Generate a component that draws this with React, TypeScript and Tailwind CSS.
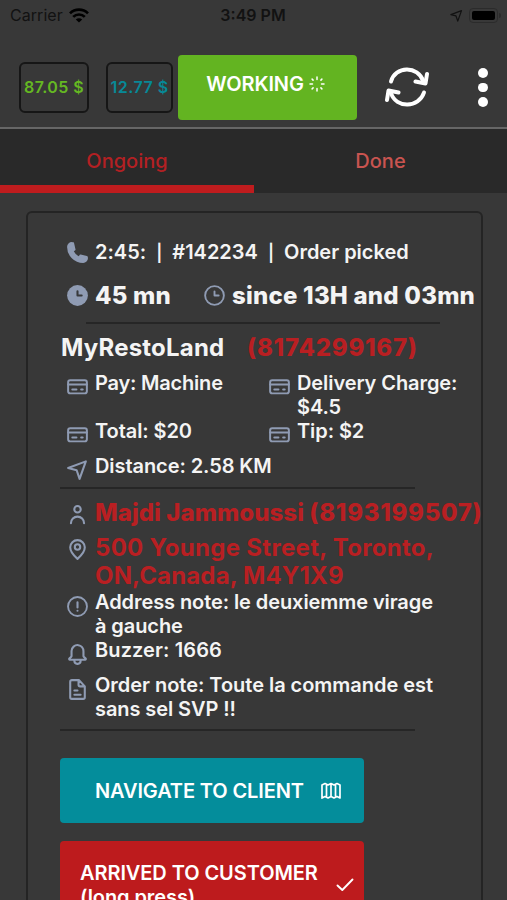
import type { ReactNode } from 'react';

type IconProps = { className?: string };

function Svg({ className, children }: IconProps & { children: ReactNode }) {
  return (
    <svg
      viewBox="0 0 24 24"
      className={className ?? 'size-[25px]'}
      fill="none"
      stroke="currentColor"
      strokeWidth={2}
      strokeLinecap="round"
      strokeLinejoin="round"
    >
      {children}
    </svg>
  );
}

function PhoneIcon() {
  return (
    <Svg>
      <path
        fill="currentColor"
        stroke="none"
        d="M17.4 22A15.42 15.42 0 0 1 2 6.6 4.6 4.6 0 0 1 6.6 2a3.94 3.94 0 0 1 .77.07 3.79 3.79 0 0 1 .72.18 1 1 0 0 1 .65.75l1.37 6a1 1 0 0 1-.26.92c-.13.14-.14.15-1.37.79a9.91 9.91 0 0 0 4.87 4.89c.65-1.24.66-1.25.8-1.38a1 1 0 0 1 .92-.26l6 1.37a1 1 0 0 1 .72.65 4.34 4.34 0 0 1 .19.73 4.77 4.77 0 0 1 .06.76A4.6 4.6 0 0 1 17.4 22z"
      />
    </Svg>
  );
}

function ClockIcon() {
  return (
    <Svg>
      <circle cx="12" cy="12" r="10" fill="currentColor" stroke="none" />
      <path d="M12 8v4h4" stroke="#38393b" />
    </Svg>
  );
}

function ClockOutlineIcon() {
  return (
    <Svg>
      <circle cx="12" cy="12" r="9" strokeWidth={1.8} />
      <path d="M12 8v4h4" strokeWidth={1.8} />
    </Svg>
  );
}

function CardIcon() {
  return (
    <Svg>
      <rect x="3" y="6" width="18" height="12.6" rx="2" strokeWidth={1.9} />
      <path d="M3 10h18M7 14.8h4M15.5 14.8h1.5" strokeWidth={1.9} />
    </Svg>
  );
}

function NavigationIcon({ className }: IconProps) {
  return (
    <Svg className={className}>
      <path d="M3 10.6 20 4.2 14 21l-2.8-8.3z" />
    </Svg>
  );
}

function PersonIcon() {
  return (
    <Svg>
      <circle cx="12" cy="7" r="3.1" />
      <path d="M5.7 20.3a6.3 6.3 0 0 1 12.6 0" />
    </Svg>
  );
}

function PinIcon() {
  return (
    <Svg>
      <path d="M12 3a7 7 0 0 0-7 6.9C5 15 12 21 12 21s7-6 7-11.1A7 7 0 0 0 12 3z" />
      <circle cx="12" cy="9.6" r="2.6" />
    </Svg>
  );
}

function AlertIcon() {
  return (
    <Svg>
      <circle cx="12" cy="12" r="9.1" strokeWidth={1.8} />
      <path d="M12 8v5M12 16v.1" />
    </Svg>
  );
}

function BellIcon() {
  return (
    <Svg>
      <path
        fill="currentColor"
        stroke="none"
        d="M20.52 15.21l-1.8-1.81V8.94a6.86 6.86 0 0 0-5.82-6.88 6.74 6.74 0 0 0-7.62 6.67v4.67l-1.8 1.81A1.64 1.64 0 0 0 4.64 18H8v.34A3.84 3.84 0 0 0 12 22a3.84 3.84 0 0 0 4-3.66V18h3.36a1.64 1.64 0 0 0 1.16-2.79zM14 18.34A1.88 1.88 0 0 1 12 20a1.88 1.88 0 0 1-2-1.66V18h4zM5.51 16l1.18-1.18a2 2 0 0 0 .59-1.42V8.73A4.73 4.73 0 0 1 8.9 5.17 4.67 4.67 0 0 1 12.64 4a4.86 4.86 0 0 1 4.08 4.9v4.5a2 2 0 0 0 .58 1.42L18.49 16z"
      />
    </Svg>
  );
}

function FileIcon() {
  return (
    <Svg>
      <path d="M13.5 3h-7A1.5 1.5 0 0 0 5 4.5v15A1.5 1.5 0 0 0 6.5 21h11a1.5 1.5 0 0 0 1.5-1.5V9zM13 3.5v4A1.5 1.5 0 0 0 14.5 9H18M9 13h3M9 17h6" />
    </Svg>
  );
}

function WifiIcon() {
  return (
    <svg viewBox="0 0 20 15" className="h-[15px] w-5" fill="none" stroke="#000" strokeWidth="2.7">
      <path d="M1 5.4a12.8 12.8 0 0 1 18 0M4.2 8.9a8.2 8.2 0 0 1 11.6 0" />
      <path d="M10 14.6 6.8 11.5a4.6 4.6 0 0 1 6.4 0z" fill="#000" stroke="none" />
    </svg>
  );
}

function RefreshIcon() {
  return (
    <svg
      viewBox="0 0 44 40"
      className="h-10 w-11"
      fill="none"
      stroke="#fff"
      strokeWidth="4"
      strokeLinecap="round"
      strokeLinejoin="round"
    >
      <path d="M6 14.5C10-1 33-2 38.5 14.5M39 25.5C34 41 11 42 6 26" />
      <path d="M42 7 40.5 16.5 30.5 14.5M2 33 3.5 23.5l10 2" />
    </svg>
  );
}

function SpinnerIcon() {
  return (
    <svg viewBox="0 0 18 18" className="size-[18px]" stroke="#fff" strokeWidth="1.5" strokeLinecap="round">
      <path d="M9 2v2.5M9 13.5V16M2 9h2.5M13.5 9H16M4.1 4.1l1 1M12.9 12.9l1 1M4.1 13.9l1-1M12.9 5.1l1-1" />
    </svg>
  );
}

function MapIcon() {
  return (
    <svg
      viewBox="0 0 20 18"
      className="h-[18px] w-5"
      fill="none"
      stroke="#fff"
      strokeWidth="1.7"
      strokeLinejoin="round"
      strokeLinecap="round"
    >
      <path d="M1 3 4 1.5 7 3l3-1.5L13 3l3-1.5L19 3v13l-3-1.5-3 1.500-3-1.500L7 16l-3-1.500L1 16zM5.500 2.500v12.500M10 2v12.500M14.500 2.500v12.500" />
    </svg>
  );
}

function CheckIcon() {
  return (
    <svg
      viewBox="0 0 18 14"
      className="h-[14px] w-[18px]"
      fill="none"
      stroke="#fff"
      strokeWidth="1.9"
      strokeLinecap="round"
      strokeLinejoin="round"
    >
      <path d="M1.5 7.5 6.3 12 16.5 1.5" />
    </svg>
  );
}

type RowProps = {
  icon: ReactNode;
  children: ReactNode;
  className?: string;
  iconClassName?: string;
};

function Row({ icon, children, className = '', iconClassName = 'mt-[3px]' }: RowProps) {
  return (
    <div className={`flex ${className}`}>
      <span className={`mr-[5px] h-0 w-[25px] shrink-0 text-[#8f9bb3] ${iconClassName}`}>{icon}</span>
      <div>{children}</div>
    </div>
  );
}

function Divider({ className }: { className: string }) {
  return <div className={`h-[2px] bg-[#262626] ${className}`} />;
}

function StatusBar() {
  return (
    <div className="flex h-[30px] shrink-0 items-center justify-between pr-[6px] pl-[10px] text-[16px] text-[#121212]">
      <div className="flex w-[170px] items-center gap-[6px]">
        <span className="tracking-[0.05px]">Carrier</span>
        <WifiIcon />
      </div>
      <span className="-ml-[5px] font-semibold">3:49 PM</span>
      <div className="flex w-[170px] items-center justify-end gap-[5px]">
        <NavigationIcon className="size-[15px]" />
        <div className="flex items-center gap-px">
          <div className="h-[15px] w-[29px] rounded-[4px] border border-[#2b2b2b] p-[2px]">
            <div className="h-full rounded-[2px] bg-black" />
          </div>
          <div className="h-[5px] w-[2px] rounded-r bg-[#2b2b2b]" />
        </div>
      </div>
    </div>
  );
}

function Toolbar() {
  return (
    <div className="flex h-[97px] shrink-0 items-start pt-[25px] pl-[19px]">
      <div className="mt-[7px] flex h-[51px] w-[70px] shrink-0 items-center justify-center rounded-[6px] border-2 border-[#161616] pb-[2px] text-[16px] font-semibold tracking-[0.4px] whitespace-nowrap text-[#65b822]">
        87.05 $
      </div>
      <div className="mt-[7px] ml-[17px] flex h-[51px] w-[67px] shrink-0 items-center justify-center rounded-[6px] border-2 border-[#161616] pb-[2px] text-[16px] font-semibold tracking-[0.5px] whitespace-nowrap text-[#078997]">
        12.77 $
      </div>
      <button className="ml-[5px] flex h-[65px] w-[179px] shrink-0 items-center justify-center gap-[4px] rounded-[4px] bg-[#63b421] pr-[3px] pb-[7px] text-[20px] font-semibold tracking-[-0.1px] text-white">
        WORKING
        <SpinnerIcon />
      </button>
      <div className="mt-[12px] ml-[28px] shrink-0">
        <RefreshIcon />
      </div>
      <div className="mt-[13px] ml-[49px] flex shrink-0 flex-col gap-[5px]">
        <span className="size-[9.5px] rounded-full bg-white" />
        <span className="size-[9.5px] rounded-full bg-white" />
        <span className="size-[9.5px] rounded-full bg-white" />
      </div>
    </div>
  );
}

function Tabs() {
  return (
    <div className="flex h-[64px] shrink-0 bg-[#292929] text-center text-[20px] leading-[64px] font-medium">
      <div className="h-full w-[254px] border-b-8 border-[#bf1c1e] text-[#b32023]">Ongoing</div>
      <div className="flex-1 text-[#c95450]">Done</div>
    </div>
  );
}

export default function App() {
  return (
    <div className="flex h-[900px] w-[507px] flex-col overflow-hidden bg-[#383838] font-[Inter,sans-serif]">
      <StatusBar />
      <Toolbar />
      <div className="h-[2px] shrink-0 bg-[#666]" />
      <Tabs />
      <div className="mt-[18px] ml-[26px] h-[760px] w-[457px] shrink-0 rounded-[6px] border-2 border-[#242424] pt-[27px] pl-[32px] text-[20px] leading-[24px] font-semibold tracking-[-0.08px] whitespace-nowrap text-[#f4f4f4]">
        <div className="pl-[5px]">
          <Row icon={<PhoneIcon />} iconClassName="mt-0">
            <span className="tracking-[-0.01px] whitespace-pre">
              {'2:45:  '}
              <span className="text-[17px]">|</span>
              {'  #142234  '}
              <span className="text-[17px]">|</span>
              {'  Order picked'}
            </span>
          </Row>
          <div className="mt-[17px] flex text-[24px] leading-[28px] font-extrabold tracking-[0.22px]">
            <Row icon={<ClockIcon />} iconClassName="mt-px" className="w-[137px]">
              45 mn
            </Row>
            <Row icon={<ClockOutlineIcon />} iconClassName="mt-px">
              since 13H and 03mn
            </Row>
          </div>
        </div>
        <Divider className="mt-[12px] ml-[26px] w-[354px]" />

        <div className="mt-[10px] ml-px flex text-[24px] leading-[28px] font-bold tracking-[0.2px]">
          <span className="w-[186px]">MyRestoLand</span>
          <span className="font-extrabold tracking-[0.75px] text-[#b91f22]">(8174299167)</span>
        </div>
        <div className="mt-[9px] grid grid-cols-[202px_180px] pl-[5px]">
          <Row icon={<CardIcon />}>
            <span className="tracking-[-0.2px]">Pay: Machine</span>
          </Row>
          <Row icon={<CardIcon />}>
            Delivery Charge:
            <br />
            $4.5
          </Row>
          <Row icon={<CardIcon />}>Total: $20</Row>
          <Row icon={<CardIcon />}>Tip: $2</Row>
        </div>
        <Row icon={<NavigationIcon />} className="mt-[11px] pl-[5px]">
          Distance: 2.58 KM
        </Row>
        <Divider className="mt-[9px] w-[355px]" />

        <div className="mt-[10px] pl-[5px]">
          <Row icon={<PersonIcon />} className="text-[24px] leading-[28px] font-extrabold">
            <span className="text-[#b91f22]">
              <span className="tracking-[0.06px]">Majdi Jammoussi </span>
              <span className="tracking-[0.7px]">(8193199507)</span>
            </span>
          </Row>
          <Row icon={<PinIcon />} className="mt-[7px] text-[24px] leading-[28px] font-bold">
            <span className="text-[#b91f22]">
              <span className="tracking-[0.3px]">500 Younge Street, Toronto,</span>
              <br />
              <span className="tracking-[0.15px]">ON,Canada, M4Y1X9</span>
            </span>
          </Row>
          <Row icon={<AlertIcon />} iconClassName="mt-[4px]">
            Address note: le deuxiemme virage
            <br />à gauche
          </Row>
          <Row icon={<BellIcon />} iconClassName="mt-[4px]">
            <span className="tracking-[0.1px]">Buzzer: 1666</span>
          </Row>
          <Row icon={<FileIcon />} iconClassName="mt-[4px]" className="mt-[11px]">
            <span className="tracking-[-0.03px]">Order note: Toute la commande est</span>
            <br />
            sans sel SVP !!
          </Row>
        </div>
        <Divider className="mt-[8px] w-[355px]" />

        <button className="mt-[27px] flex h-[65px] w-[304px] items-center rounded-[4px] bg-[#048d9b] pl-[35px] text-white">
          <span className="w-[226px] text-left tracking-[-0.12px]">NAVIGATE TO CLIENT</span>
          <MapIcon />
        </button>
        <button className="mt-[18px] flex h-[88px] w-[304px] items-center rounded-[4px] bg-[#bd1b1d] pl-[20px] text-left text-white">
          <span className="w-[256px] pb-px">
            ARRIVED TO CUSTOMER
            <br />
            (long press)
          </span>
          <CheckIcon />
        </button>
      </div>
    </div>
  );
}
